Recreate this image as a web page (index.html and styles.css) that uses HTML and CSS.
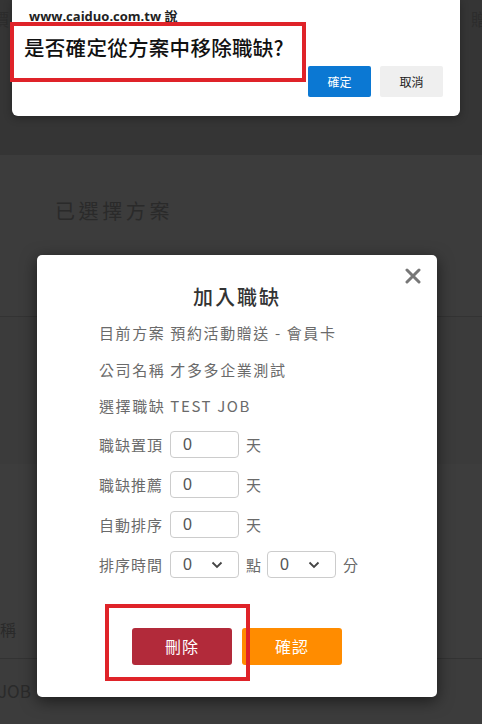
FILE: index.html
```html
<!DOCTYPE html>
<html lang="zh-Hant">

<head>
    <meta charset="UTF-8">
    <meta name="viewport" content="width=device-width, initial-scale=1.0">
    <title>加入職缺</title>
    <link rel="stylesheet" href="styles.css">
</head>

<body>
    <div class="page">
        <div class="top-band">
            <span class="ghost-left">價</span>
            <span class="ghost-right">贈</span>
        </div>
        <div class="plan-section">
            <h2 class="plan-title">已選擇方案</h2>
        </div>
        <div class="band"></div>
        <div class="band band-lower">
            <span class="ghost-cell">稱</span>
        </div>
        <div class="band-last">
            <span class="ghost-cell">JOB</span>
        </div>
    </div>

    <div class="alert">
        <div class="alert-origin">www.caiduo.com.tw 說</div>
        <div class="alert-msg">是否確定從方案中移除職缺?</div>
        <div class="alert-btns">
            <button class="alert-btn ok">確定</button>
            <button class="alert-btn cancel">取消</button>
        </div>
    </div>
    <div class="mark mark-msg"></div>

    <div class="modal">
        <svg class="close" width="16" height="16" viewBox="0 0 16 16"><path d="M2 2 L14 14 M14 2 L2 14" stroke="#777" stroke-width="3" stroke-linecap="round"/></svg>
        <h3 class="modal-title">加入職缺</h3>
        <div class="info-row">目前方案 預約活動贈送 - 會員卡</div>
        <div class="info-row">公司名稱 才多多企業測試</div>
        <div class="info-row">選擇職缺 TEST JOB</div>

        <div class="field-row">
            <span class="label">職缺置頂</span>
            <div class="box">0</div>
            <span class="unit">天</span>
        </div>
        <div class="field-row">
            <span class="label">職缺推薦</span>
            <div class="box">0</div>
            <span class="unit">天</span>
        </div>
        <div class="field-row">
            <span class="label">自動排序</span>
            <div class="box">0</div>
            <span class="unit">天</span>
        </div>
        <div class="field-row">
            <span class="label">排序時間</span>
            <div class="box select">0
                <svg class="chev" width="12" height="8" viewBox="0 0 12 8"><path d="M1.5 1.5 L6 6 L10.5 1.5" fill="none" stroke="#444" stroke-width="1.8"/></svg>
            </div>
            <span class="unit">點</span>
            <div class="box select">0
                <svg class="chev" width="12" height="8" viewBox="0 0 12 8"><path d="M1.5 1.5 L6 6 L10.5 1.5" fill="none" stroke="#444" stroke-width="1.8"/></svg>
            </div>
            <span class="unit">分</span>
        </div>

        <div class="modal-btns">
            <button class="mbtn del">刪除</button>
            <button class="mbtn confirm">確認</button>
        </div>
    </div>
    <div class="mark mark-del"></div>
</body>

</html>
```

FILE: styles.css
```css
body {
    margin: 0;
    width: 482px;
    height: 724px;
    overflow: hidden;
    background-color: #3c3c3c;
    font-family: "Noto Sans CJK TC", "Liberation Sans", sans-serif;
    position: relative;
}

.page {
    display: flex;
    flex-direction: column;
}

.top-band {
    height: 155px;
    background-color: #353535;
    display: flex;
    justify-content: space-between;
    align-items: flex-start;
    overflow: hidden;
}

.ghost-left {
    margin-left: -8px;
    margin-top: 6px;
    font-size: 17px;
    color: #2c2c2c;
}

.ghost-right {
    margin-right: -6px;
    margin-top: 6px;
    font-size: 17px;
    color: #2c2c2c;
}

.plan-section {
    height: 161px;
    border-bottom: 1px solid #333;
    box-sizing: content-box;
    padding-left: 55px;
}

.plan-title {
    margin: 0;
    margin-top: 41px;
    font-size: 20px;
    font-weight: normal;
    letter-spacing: 3.6px;
    line-height: 30px;
    color: #2a2a2a;
}

.band {
    height: 147px;
    background-color: #3b3b3b;
}

.band-lower {
    height: 194px;
    background-color: #3d3d3d;
    border-bottom: 1px solid #333;
    display: flex;
    align-items: flex-end;
}

.band-last {
    flex: 1;
    height: 65px;
}

.ghost-cell {
    font-size: 16px;
    color: #2a2a2a;
    line-height: 20px;
}

.band-lower .ghost-cell {
    margin-bottom: 19px;
}

.band-last .ghost-cell {
    display: block;
    margin-top: 22px;
    margin-left: -2px;
    font-size: 17px;
}

/* browser confirm dialog */
.alert {
    position: absolute;
    left: 12px;
    top: 0;
    width: 448px;
    height: 116px;
    background: #fff;
    border-radius: 0 0 6px 6px;
    box-shadow: 0 2px 8px rgba(0, 0, 0, 0.3);
    box-sizing: border-box;
    padding: 8px 17px 0 17px;
}

.alert-origin {
    font-family: "Open Sans", "Liberation Sans", "Noto Sans CJK TC", sans-serif;
    font-weight: bold;
    font-size: 13px;
    color: #222;
    line-height: 16px;
}

.alert-msg {
    margin-top: 10px;
    margin-left: -5px;
    font-size: 20.5px;
    font-weight: 500;
    letter-spacing: 0.3px;
    color: #111;
    line-height: 26px;
}

.alert-btns {
    display: flex;
    justify-content: flex-end;
    gap: 9px;
    margin-top: 6px;
}

.alert-btn {
    width: 63px;
    height: 31px;
    border: none;
    border-radius: 2px;
    font-family: "Noto Sans CJK TC", sans-serif;
    font-size: 12px;
}

.alert-btn.ok {
    background-color: #0b78d3;
    color: #fff;
}

.alert-btn.cancel {
    background-color: #efefef;
    color: #222;
}

.mark {
    position: absolute;
    border: 4px solid #df2329;
    box-sizing: border-box;
}

.mark-msg {
    left: 10px;
    top: 22px;
    width: 296px;
    height: 60px;
}

.mark-del {
    left: 105px;
    top: 604px;
    width: 145px;
    height: 77px;
}

/* add job modal */
.modal {
    position: absolute;
    left: 37px;
    top: 255px;
    width: 400px;
    height: 442px;
    background: #fff;
    border-radius: 5px;
    box-shadow: 0 4px 16px rgba(0, 0, 0, 0.55);
    box-sizing: border-box;
    padding: 27px 0 0 62px;
    color: #6a6a6a;
}

.close {
    position: absolute;
    right: 16px;
    top: 13px;
}

.modal-title {
    margin: 0 0 3px -62px;
    text-align: center;
    font-size: 20px;
    font-weight: 500;
    letter-spacing: 2px;
    line-height: 30px;
    color: #333;
}

.info-row {
    height: 36.5px;
    line-height: 36px;
    font-size: 15px;
    letter-spacing: 1.6px;
}

.field-row {
    height: 40px;
    display: flex;
    align-items: center;
    font-size: 15px;
    letter-spacing: 1px;
}

.label {
    width: 71px;
}

.box {
    width: 69px;
    height: 27px;
    border: 1px solid #ccc;
    border-radius: 4px;
    box-sizing: border-box;
    display: flex;
    align-items: center;
    padding-left: 12px;
    font-family: "Liberation Sans", sans-serif;
    font-size: 16px;
    color: #555;
}

.select {
    justify-content: space-between;
    padding-right: 15px;
}

.unit {
    width: 28px;
    padding-left: 7px;
    box-sizing: border-box;
}

.modal-btns {
    display: flex;
    justify-content: center;
    gap: 10px;
    margin: 43px 0 0 -62px;
}

.mbtn {
    width: 100px;
    height: 37px;
    border: none;
    border-radius: 3px;
    color: #fff;
    font-family: "Noto Sans CJK TC", sans-serif;
    font-size: 16px;
    letter-spacing: 1px;
}

.mbtn.del {
    background-color: #b22a3a;
}

.mbtn.confirm {
    background-color: #ff8c00;
}
```
